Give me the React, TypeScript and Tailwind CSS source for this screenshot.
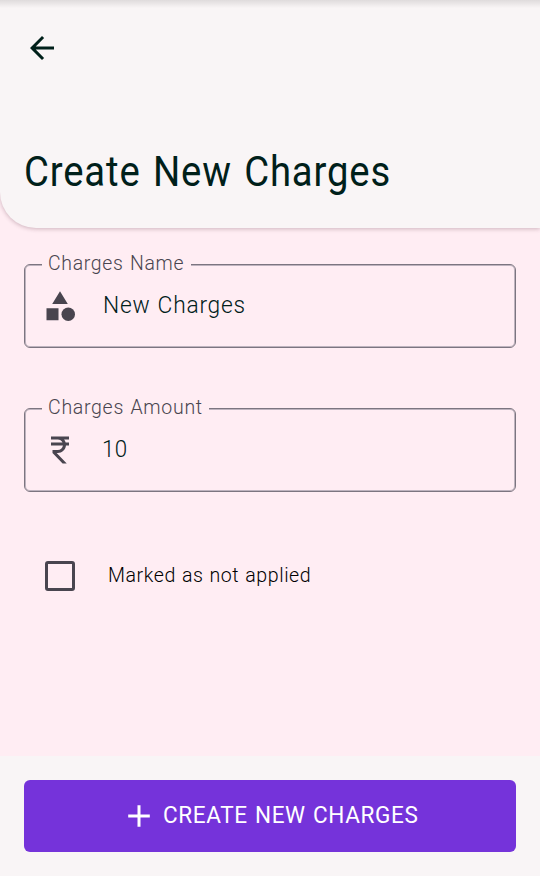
import type { ReactNode } from 'react';

function Field({ label, notch, labelStyle, icon, children }: { label: string; notch: string; labelStyle: string; icon: ReactNode; children: ReactNode }) {
  return (
    <div className="relative flex h-[84px] items-center rounded-[6px] border border-[#7c7580] pl-5 shadow-[inset_0_0_0_1px_#beb3be]">
      <div className={`absolute -top-[16px] left-[17px] h-7 bg-[#ffedf3] pl-[6px] ${notch}`}>
        <span className={`block w-max origin-left whitespace-nowrap text-[21px] leading-[28px] font-light text-[#49454f] ${labelStyle}`}>{label}</span>
      </div>
      <div className="h-9 w-9 shrink-0 -ml-[3px] text-[#49454f]">{icon}</div>
      {children}
    </div>
  );
}

export default function App() {
  return (
    <div className="flex h-[876px] w-[540px] flex-col overflow-hidden bg-[#ffedf3] font-['Roboto',sans-serif]">
      <header className="relative h-[228px] rounded-bl-[36px] bg-[#f9f5f6] shadow-[0_1px_4px_rgba(80,30,50,0.28)]">
        <div className="absolute inset-x-0 top-0 h-2 bg-gradient-to-b from-[#dfdbdc] to-[#f9f5f6]" />
        <div className="pt-[30px] pl-6">
          <svg className="h-9 w-9" viewBox="0 0 24 24" fill="#00201a"><path d="M20 11H7.83l5.59-5.59L12 4l-8 8 8 8 1.41-1.41L7.83 13H20v-2z" /></svg>
        </div>
        <h1 className="mt-[79px] ml-6 w-max origin-left scale-x-[0.89] whitespace-nowrap text-[43px] leading-[52px] font-normal tracking-[0.95px] text-[#00201a] [word-spacing:2.3px]">Create New Charges</h1>
      </header>
      <main className="flex flex-1 flex-col px-6 pt-9">
        <Field
          label="Charges Name"
          notch="w-[149px]"
          labelStyle="scale-x-[0.925] tracking-[0.75px] [word-spacing:1px]"
          icon={<svg className="h-9 w-9" viewBox="0 0 24 24" fill="currentColor"><path d="M12 2.2 6.8 10.7h10.4zM3 13.5h8v8H3z" /><circle cx="17.5" cy="17.5" r="4.5" /></svg>}
        >
          <span className="mb-[2px] ml-[25px] w-max origin-left scale-x-[0.93] whitespace-nowrap text-[24.5px] leading-8 font-light tracking-[0.8px] text-[#00201a] [word-spacing:1px]">New Charges</span>
        </Field>
        <div className="mt-[60px]">
          <Field
            label="Charges Amount"
            notch="w-[167px]"
            labelStyle="scale-x-[0.93] tracking-[0.75px] [word-spacing:1px]"
            icon={<svg className="h-9 w-9" viewBox="0 0 24 24" fill="currentColor"><path d="M13.66 7c-.56-1.18-1.76-2-3.16-2H6V3h12v2h-3.26c.48.58.84 1.26 1.05 2H18v2h-2.02c-.25 2.8-2.61 5-5.48 5h-.73l6.73 7h-2.77L7 14v-2h3.5c1.76 0 3.22-1.3 3.46-3H6V7h7.66z" /></svg>}
          >
            <span className="mb-[2px] ml-[24px] w-max origin-left scale-x-[0.91] whitespace-nowrap text-[24.5px] leading-8 font-light tracking-[0.3px] text-[#00201a]">10</span>
          </Field>
        </div>
        <label className="mt-[69px] flex h-[30px] items-center pl-[21px]">
          <span className="h-[30px] w-[30px] rounded-[3px] border-3 border-[#49454f]" />
          <span className="mb-[2px] ml-[33px] w-max origin-left scale-x-[0.955] whitespace-nowrap text-[20.5px] leading-7 font-light tracking-[0.6px] text-black [word-spacing:0.7px]">Marked as not applied</span>
        </label>
      </main>
      <footer className="h-[120px] bg-[#f9f5f6] p-6">
        <button className="flex h-[72px] w-full items-center rounded-[6px] bg-[#7533da] pl-[97px] text-white">
          <svg className="h-9 w-9" viewBox="0 0 36 36" stroke="currentColor" strokeWidth="3"><path d="M7.2 18h21.6M18 7.2v21.6" /></svg>
          <span className="mb-[2px] ml-[6px] w-max origin-left scale-x-[0.92] whitespace-nowrap text-[24.5px] leading-8 tracking-[0.7px] [word-spacing:1px]">CREATE NEW CHARGES</span>
        </button>
      </footer>
    </div>
  );
}
